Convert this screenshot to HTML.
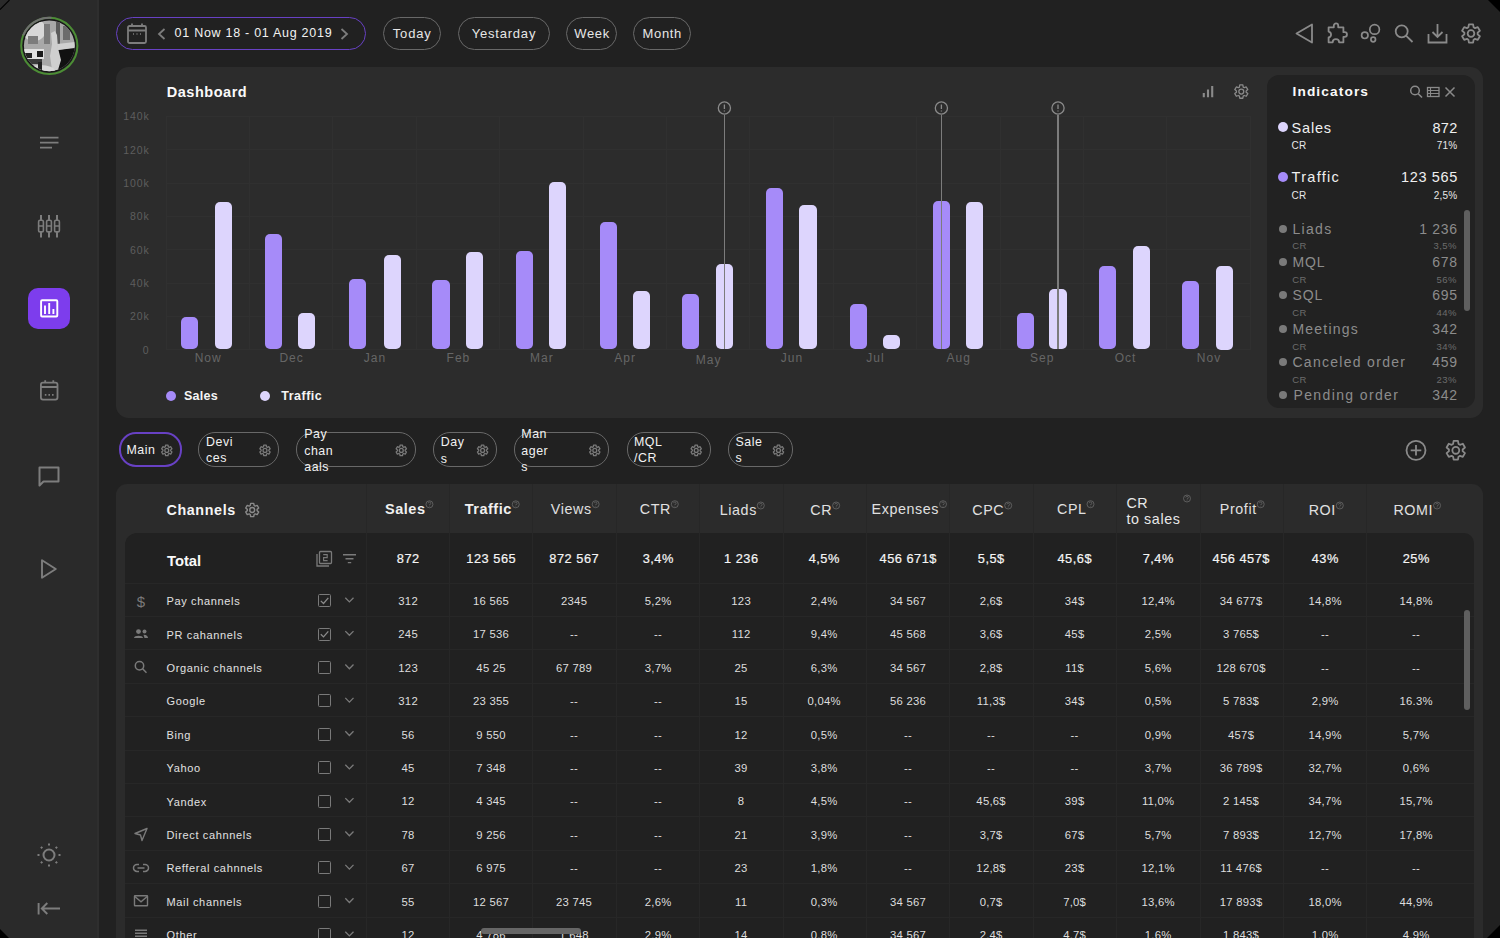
<!DOCTYPE html><html><head><meta charset="utf-8"><style>
*{box-sizing:border-box;margin:0;padding:0}
html,body{width:1500px;height:938px;overflow:hidden;background:#212121;font-family:"Liberation Sans", sans-serif;color:#fff}
.a{position:absolute}
.t{position:absolute;white-space:nowrap;line-height:1}
svg{position:absolute;overflow:visible}
</style></head><body><div class="a" style="left:0;top:0;width:99px;height:938px;background:#2a2a2a"></div>
<div class="a" style="left:96.8px;top:0;width:2.2px;height:938px;background:#2e2e2e"></div>
<svg style="left:0;top:0" width="1" height="1">
<defs><clipPath id="avc"><circle cx="49.3" cy="45.8" r="25.4"/></clipPath></defs>
<circle cx="49.3" cy="45.8" r="28.1" fill="none" stroke="#4c8d35" stroke-width="2"/>
<circle cx="49.3" cy="45.8" r="28.1" fill="none" stroke="#707070" stroke-width="2" stroke-dasharray="35.5 200" transform="rotate(202 49.3 45.8)"/>
<circle cx="49.3" cy="45.8" r="26.6" fill="#151515"/>
<g clip-path="url(#avc)">
<rect x="20" y="18" width="60" height="60" fill="#a8a8a8"/>
<ellipse cx="34" cy="30" rx="12" ry="11" fill="#d8d8d8"/>
<rect x="56" y="22" width="4" height="22" fill="#5a5a5a"/><rect x="63" y="26" width="7" height="14" fill="#6c6c6c"/>
<rect x="44" y="24" width="6" height="20" fill="#7a7a7a"/><rect x="28" y="36" width="10" height="8" fill="#7c7c7c"/>
<path d="M58 50L76 47V76H56Z" fill="#111"/>
<path d="M57 44L76 42V48L58 50Z" fill="#d0d0d0"/>
<rect x="22" y="49" width="22" height="10" fill="#e0e0e0"/>
<rect x="23" y="53" width="9" height="5" fill="#222"/><rect x="37" y="51" width="6" height="6" fill="#1a1a1a"/>
<rect x="22" y="59" width="20" height="5" fill="#3a3a3a"/>
<path d="M51 33L55 31L57 35L58 48L61 60L58 70L52 70L50 56L52 44Z" fill="#cfcfcf"/>
<ellipse cx="40" cy="71" rx="15" ry="6" fill="#d9d9d9"/>
<rect x="38" y="62" width="4" height="10" fill="#222"/>
</g></svg>
<svg style="left:0;top:0" width="1" height="1"><path d="M40 137.7H58.5M40 142.7H58.5M40 147.7H52" stroke="#7d7d7d" stroke-width="1.7" fill="none"/></svg>
<svg style="left:37px;top:214px" width="24" height="24" viewBox="0 0 24 24" fill="none" stroke="#7d7d7d" stroke-width="2">
<path d="M4 1V23.5M12 1V23.5M20 1V23.5"/>
<rect x="1.6" y="6.3" width="4.8" height="11.6" rx="1.5" fill="#2a2a2a" stroke-width="1.6"/><rect x="9.6" y="6.3" width="4.8" height="11.6" rx="1.5" fill="#2a2a2a" stroke-width="1.6"/><rect x="17.6" y="6.3" width="4.8" height="11.6" rx="1.5" fill="#2a2a2a" stroke-width="1.6"/>
<path d="M1.6 12H6.4M9.6 12H14.4M17.6 12H22.4" stroke-width="1.4"/>
</svg>
<div class="a" style="left:28px;top:287.5px;width:42px;height:41.7px;border-radius:10px;background:#7d3ded"></div>
<svg style="left:0;top:0" width="1" height="1" fill="none" stroke="#fff" stroke-width="1.9"><rect x="41.1" y="300.3" width="16.2" height="16.2" rx="1"/><path d="M45 305.6V314M49.2 302.9V314M53.4 309V314"/></svg>
<svg style="left:0;top:0" width="1" height="1" fill="none" stroke="#7d7d7d" stroke-width="1.8"><rect x="40.9" y="382.6" width="16.6" height="17" rx="2"/><path d="M40.9 387H57.5M45.2 380.3V383M53.3 380.3V383"/><path d="M44.8 394.8H46.4M48.4 394.8H50M52 394.8H53.6" stroke-width="1.7"/></svg>
<svg style="left:38px;top:465.7px" width="22" height="22" viewBox="0 0 22 22" fill="none" stroke="#7d7d7d" stroke-width="2"><path d="M1.5 1.5H20.5V15.5H5.5L1.5 19.5Z" stroke-linejoin="round"/></svg>
<svg style="left:0;top:0" width="1" height="1" fill="none" stroke="#7d7d7d" stroke-width="1.9"><path d="M42 560.3L55.8 569L42 577.7Z" stroke-linejoin="round"/></svg>
<svg style="left:36px;top:842px" width="26" height="26" viewBox="0 0 26 26" fill="none" stroke="#7d7d7d" stroke-width="2"><circle cx="13" cy="13" r="5.5"/>
<path d="M13 1.5V3.5M13 22.5V24.5M1.5 13H3.5M22.5 13H24.5M4.9 4.9L6.3 6.3M19.7 19.7L21.1 21.1M4.9 21.1L6.3 19.7M19.7 6.3L21.1 4.9"/></svg>
<svg style="left:0;top:0" width="1" height="1" fill="none" stroke="#7d7d7d" stroke-width="1.9"><path d="M38.6 903V914.5M60 908.5H42M47.3 903L41.8 908.5L47.3 914"/></svg>
<div class="a" style="left:116px;top:16.5px;width:250px;height:33.5px;border-radius:17px;border:1.8px solid #6841c4"></div>
<svg style="left:127px;top:23px" width="20" height="21" viewBox="0 0 20 21" fill="none" stroke="#7d7d7d" stroke-width="1.8"><rect x="1" y="3" width="18" height="17" rx="1.5"/><path d="M1 7.5H19M5 0.5V3.5M15 0.5V3.5"/><path d="M6 11H7M9.5 11H10.5M13 11H14" stroke-width="1.5"/></svg>
<svg style="left:157px;top:28px" width="9" height="12" viewBox="0 0 9 12" fill="none" stroke="#7d7d7d" stroke-width="1.8"><path d="M7.5 1L2 6L7.5 11"/></svg>
<div class="t" style="left:174.60px;top:27.12px;font-size:12.5px;color:#f2f2f2;letter-spacing:0.724px;">01 Now 18 - 01 Aug 2019</div>
<svg style="left:340px;top:28px" width="9" height="12" viewBox="0 0 9 12" fill="none" stroke="#7d7d7d" stroke-width="1.8"><path d="M1.5 1L7 6L1.5 11"/></svg>
<div class="a" style="left:382.5px;top:16.5px;width:58.5px;height:33.5px;border-radius:17px;border:1.7px solid #686868"></div>
<div class="t" style="left:392.80px;top:26.70px;font-size:13px;color:#e6e6e6;letter-spacing:0.827px;">Today</div>
<div class="a" style="left:457.5px;top:16.5px;width:92.2px;height:33.5px;border-radius:17px;border:1.7px solid #686868"></div>
<div class="t" style="left:471.70px;top:26.70px;font-size:13px;color:#e6e6e6;letter-spacing:0.795px;">Yestarday</div>
<div class="a" style="left:565.8px;top:16.5px;width:51.2px;height:33.5px;border-radius:17px;border:1.7px solid #686868"></div>
<div class="t" style="left:574.20px;top:26.70px;font-size:13px;color:#e6e6e6;letter-spacing:0.668px;">Week</div>
<div class="a" style="left:632.8px;top:16.5px;width:58.4px;height:33.5px;border-radius:17px;border:1.7px solid #686868"></div>
<div class="t" style="left:642.50px;top:26.70px;font-size:13px;color:#e6e6e6;letter-spacing:0.667px;">Month</div>
<svg style="left:1295px;top:23px" width="19" height="21" viewBox="0 0 19 21" fill="none" stroke="#8a8a8a" stroke-width="1.8" stroke-linejoin="round"><path d="M17 1.5V19.5L1.5 10.5Z"/></svg>
<svg style="left:0;top:0" width="1" height="1" fill="none" stroke="#8a8a8a" stroke-width="1.8" stroke-linejoin="round"><path d="M1328.6 27.3H1333.8V25.6A2.2 2.2 0 0 1 1338.2 25.6V27.3H1343.4V32.2H1344.6A2.35 2.35 0 0 1 1344.6 36.9H1343.4V42.3H1339.1A3.2 3.2 0 0 0 1332.7 42.3H1328.6V37.5A3 3 0 0 0 1328.6 31.6Z"/></svg>
<svg style="left:0;top:0" width="1" height="1" fill="none" stroke="#8a8a8a" stroke-width="1.7"><circle cx="1374.6" cy="29.4" r="4.8"/><circle cx="1364.8" cy="35.3" r="3.2"/><circle cx="1373.2" cy="39.5" r="2.3"/></svg>
<svg style="left:1394px;top:23px" width="20" height="20" viewBox="0 0 20 20" fill="none" stroke="#8a8a8a" stroke-width="1.8"><circle cx="7.7" cy="8.3" r="6"/><path d="M12 12.6L18.5 19"/></svg>
<svg style="left:1427px;top:23px" width="21" height="21" viewBox="0 0 21 21" fill="none" stroke="#8a8a8a" stroke-width="1.8"><path d="M1.5 11V19.5H19.5V11M10.5 1V14M5.5 9L10.5 14L15.5 9"/></svg>
<svg style="left:0;top:0" width="1" height="1"><path d="M1468.38 27.34L1468.91 24.44L1473.09 24.44L1473.62 27.34L1475.03 28.15L1477.80 27.16L1479.89 30.78L1477.65 32.68L1477.65 34.32L1479.89 36.22L1477.80 39.84L1475.03 38.85L1473.62 39.66L1473.09 42.56L1468.91 42.56L1468.38 39.66L1466.97 38.85L1464.20 39.84L1462.11 36.22L1464.35 34.32L1464.35 32.68L1462.11 30.78L1464.20 27.16L1466.97 28.15Z" fill="none" stroke="#8a8a8a" stroke-width="1.8" stroke-linejoin="round"/><circle cx="1471" cy="33.5" r="3.35" fill="none" stroke="#8a8a8a" stroke-width="1.8"/></svg>
<div class="a" style="left:116px;top:67px;width:1367px;height:350.5px;border-radius:12.5px;background:#2c2c2c"></div>
<div class="t" style="left:166.70px;top:84.83px;font-size:14.5px;color:#fafafa;font-weight:700;letter-spacing:0.533px;">Dashboard</div>
<div class="t" style="left:123.23px;top:111.41px;font-size:10.5px;color:#5e5e5e;letter-spacing:0.900px;">140k</div>
<div class="t" style="left:123.23px;top:144.74px;font-size:10.5px;color:#5e5e5e;letter-spacing:0.900px;">120k</div>
<div class="t" style="left:123.23px;top:178.07px;font-size:10.5px;color:#5e5e5e;letter-spacing:0.900px;">100k</div>
<div class="t" style="left:129.97px;top:211.40px;font-size:10.5px;color:#5e5e5e;letter-spacing:0.900px;">80k</div>
<div class="t" style="left:129.97px;top:244.73px;font-size:10.5px;color:#5e5e5e;letter-spacing:0.900px;">60k</div>
<div class="t" style="left:129.97px;top:278.06px;font-size:10.5px;color:#5e5e5e;letter-spacing:0.900px;">40k</div>
<div class="t" style="left:129.97px;top:311.39px;font-size:10.5px;color:#5e5e5e;letter-spacing:0.900px;">20k</div>
<div class="t" style="left:142.86px;top:344.72px;font-size:10.5px;color:#5e5e5e;letter-spacing:0.900px;">0</div>
<div class="a" style="left:166px;top:116.00px;width:1084px;height:1px;background:#303030"></div>
<div class="a" style="left:166px;top:149.33px;width:1084px;height:1px;background:#303030"></div>
<div class="a" style="left:166px;top:182.66px;width:1084px;height:1px;background:#303030"></div>
<div class="a" style="left:166px;top:215.99px;width:1084px;height:1px;background:#303030"></div>
<div class="a" style="left:166px;top:249.32px;width:1084px;height:1px;background:#303030"></div>
<div class="a" style="left:166px;top:282.65px;width:1084px;height:1px;background:#303030"></div>
<div class="a" style="left:166px;top:315.98px;width:1084px;height:1px;background:#303030"></div>
<div class="a" style="left:166px;top:349.31px;width:1084px;height:1px;background:#303030"></div>
<div class="a" style="left:165.50px;top:116px;width:1px;height:234px;background:#303030"></div>
<div class="a" style="left:248.90px;top:116px;width:1px;height:234px;background:#303030"></div>
<div class="a" style="left:332.30px;top:116px;width:1px;height:234px;background:#303030"></div>
<div class="a" style="left:415.70px;top:116px;width:1px;height:234px;background:#303030"></div>
<div class="a" style="left:499.10px;top:116px;width:1px;height:234px;background:#303030"></div>
<div class="a" style="left:582.50px;top:116px;width:1px;height:234px;background:#303030"></div>
<div class="a" style="left:665.90px;top:116px;width:1px;height:234px;background:#303030"></div>
<div class="a" style="left:749.30px;top:116px;width:1px;height:234px;background:#303030"></div>
<div class="a" style="left:832.70px;top:116px;width:1px;height:234px;background:#303030"></div>
<div class="a" style="left:916.10px;top:116px;width:1px;height:234px;background:#303030"></div>
<div class="a" style="left:999.50px;top:116px;width:1px;height:234px;background:#303030"></div>
<div class="a" style="left:1082.90px;top:116px;width:1px;height:234px;background:#303030"></div>
<div class="a" style="left:1166.30px;top:116px;width:1px;height:234px;background:#303030"></div>
<div class="a" style="left:1249.70px;top:116px;width:1px;height:234px;background:#303030"></div>
<div class="t" style="left:194.70px;top:352.34px;font-size:12px;color:#666666;letter-spacing:1.000px;">Now</div>
<div class="t" style="left:279.43px;top:352.34px;font-size:12px;color:#666666;letter-spacing:1.000px;">Dec</div>
<div class="t" style="left:363.83px;top:352.34px;font-size:12px;color:#666666;letter-spacing:1.000px;">Jan</div>
<div class="t" style="left:446.56px;top:352.34px;font-size:12px;color:#666666;letter-spacing:1.000px;">Feb</div>
<div class="t" style="left:529.97px;top:352.34px;font-size:12px;color:#666666;letter-spacing:1.000px;">Mar</div>
<div class="t" style="left:614.36px;top:352.34px;font-size:12px;color:#666666;letter-spacing:1.000px;">Apr</div>
<div class="t" style="left:695.76px;top:354.34px;font-size:12px;color:#666666;letter-spacing:1.000px;">May</div>
<div class="t" style="left:780.83px;top:352.34px;font-size:12px;color:#666666;letter-spacing:1.000px;">Jun</div>
<div class="t" style="left:866.23px;top:352.34px;font-size:12px;color:#666666;letter-spacing:1.000px;">Jul</div>
<div class="t" style="left:946.62px;top:352.34px;font-size:12px;color:#666666;letter-spacing:1.000px;">Aug</div>
<div class="t" style="left:1030.02px;top:352.34px;font-size:12px;color:#666666;letter-spacing:1.000px;">Sep</div>
<div class="t" style="left:1114.77px;top:352.34px;font-size:12px;color:#666666;letter-spacing:1.000px;">Oct</div>
<div class="t" style="left:1196.83px;top:352.34px;font-size:12px;color:#666666;letter-spacing:1.000px;">Nov</div>
<div class="a" style="left:181.30px;top:316.7px;width:17.2px;height:32.5px;border-radius:5px;background:#a68bf9"></div>
<div class="a" style="left:214.90px;top:202.0px;width:17.2px;height:147.2px;border-radius:5px;background:#ddd5fd"></div>
<div class="a" style="left:264.80px;top:234.4px;width:17.2px;height:114.8px;border-radius:5px;background:#a68bf9"></div>
<div class="a" style="left:298.00px;top:312.8px;width:17.2px;height:36.4px;border-radius:5px;background:#ddd5fd"></div>
<div class="a" style="left:349.20px;top:279.2px;width:17.2px;height:70.0px;border-radius:5px;background:#a68bf9"></div>
<div class="a" style="left:383.60px;top:255.2px;width:17.2px;height:94.0px;border-radius:5px;background:#ddd5fd"></div>
<div class="a" style="left:432.40px;top:280.4px;width:17.2px;height:68.8px;border-radius:5px;background:#a68bf9"></div>
<div class="a" style="left:466.00px;top:252.4px;width:17.2px;height:96.8px;border-radius:5px;background:#ddd5fd"></div>
<div class="a" style="left:516.00px;top:251.2px;width:17.2px;height:98.0px;border-radius:5px;background:#a68bf9"></div>
<div class="a" style="left:549.20px;top:182.4px;width:17.2px;height:166.8px;border-radius:5px;background:#ddd5fd"></div>
<div class="a" style="left:600.30px;top:222.0px;width:17.2px;height:127.2px;border-radius:5px;background:#a68bf9"></div>
<div class="a" style="left:632.70px;top:290.8px;width:17.2px;height:58.4px;border-radius:5px;background:#ddd5fd"></div>
<div class="a" style="left:681.70px;top:293.6px;width:17.2px;height:55.6px;border-radius:5px;background:#a68bf9"></div>
<div class="a" style="left:716.20px;top:263.8px;width:17.2px;height:85.4px;border-radius:5px;background:#ddd5fd"></div>
<div class="a" style="left:765.90px;top:187.5px;width:17.2px;height:161.7px;border-radius:5px;background:#a68bf9"></div>
<div class="a" style="left:799.40px;top:205.2px;width:17.2px;height:144.0px;border-radius:5px;background:#ddd5fd"></div>
<div class="a" style="left:849.50px;top:304.3px;width:17.2px;height:44.9px;border-radius:5px;background:#a68bf9"></div>
<div class="a" style="left:883.10px;top:335.2px;width:17.2px;height:14.0px;border-radius:5px;background:#ddd5fd"></div>
<div class="a" style="left:932.80px;top:200.8px;width:17.2px;height:148.4px;border-radius:5px;background:#a68bf9"></div>
<div class="a" style="left:966.20px;top:201.9px;width:17.2px;height:147.3px;border-radius:5px;background:#ddd5fd"></div>
<div class="a" style="left:1017.20px;top:312.6px;width:17.2px;height:36.6px;border-radius:5px;background:#a68bf9"></div>
<div class="a" style="left:1049.40px;top:288.8px;width:17.2px;height:60.4px;border-radius:5px;background:#ddd5fd"></div>
<div class="a" style="left:1099.30px;top:266.4px;width:17.2px;height:82.8px;border-radius:5px;background:#a68bf9"></div>
<div class="a" style="left:1133.00px;top:245.9px;width:17.2px;height:103.3px;border-radius:5px;background:#ddd5fd"></div>
<div class="a" style="left:1181.80px;top:281.1px;width:17.2px;height:68.1px;border-radius:5px;background:#a68bf9"></div>
<div class="a" style="left:1215.90px;top:266.4px;width:17.2px;height:83.8px;border-radius:5px;background:#ddd5fd"></div>
<div class="a" style="left:723.80px;top:115px;width:1.3px;height:234px;background:#7c7c7c"></div>
<svg style="left:0;top:0" width="1" height="1"><circle cx="724.4" cy="108" r="6.1" fill="#2c2c2c" stroke="#8a8a8a" stroke-width="1.3"/><path d="M724.4 104.5V109M724.4 110.6V111.6" stroke="#8a8a8a" stroke-width="1.3"/></svg>
<div class="a" style="left:940.80px;top:115px;width:1.3px;height:234px;background:#7c7c7c"></div>
<svg style="left:0;top:0" width="1" height="1"><circle cx="941.4" cy="108" r="6.1" fill="#2c2c2c" stroke="#8a8a8a" stroke-width="1.3"/><path d="M941.4 104.5V109M941.4 110.6V111.6" stroke="#8a8a8a" stroke-width="1.3"/></svg>
<div class="a" style="left:1057.40px;top:115px;width:1.3px;height:234px;background:#7c7c7c"></div>
<svg style="left:0;top:0" width="1" height="1"><circle cx="1058" cy="108" r="6.1" fill="#2c2c2c" stroke="#8a8a8a" stroke-width="1.3"/><path d="M1058 104.5V109M1058 110.6V111.6" stroke="#8a8a8a" stroke-width="1.3"/></svg>
<svg style="left:0;top:0" width="1" height="1"><path d="M1203.8 97.2V93M1208 97.2V89.5M1212.2 97.2V86" stroke="#8a8a8a" stroke-width="2.1"/></svg>
<svg style="left:0;top:0" width="1" height="1"><path d="M1239.39 87.09L1239.77 84.97L1242.83 84.97L1243.21 87.09L1244.25 87.69L1246.27 86.96L1247.80 89.61L1246.16 91.00L1246.16 92.20L1247.80 93.59L1246.27 96.24L1244.25 95.51L1243.21 96.11L1242.83 98.23L1239.77 98.23L1239.39 96.11L1238.35 95.51L1236.33 96.24L1234.80 93.59L1236.44 92.20L1236.44 91.00L1234.80 89.61L1236.33 86.96L1238.35 87.69Z" fill="none" stroke="#8a8a8a" stroke-width="1.3" stroke-linejoin="round"/><circle cx="1241.3" cy="91.6" r="2.45" fill="none" stroke="#8a8a8a" stroke-width="1.3"/></svg>
<div class="a" style="left:165.6px;top:390.6px;width:10.8px;height:10.8px;border-radius:50%;background:#a68bf9"></div>
<div class="t" style="left:184.00px;top:389.62px;font-size:12.5px;color:#f5f5f5;font-weight:700;letter-spacing:0.283px;">Sales</div>
<div class="a" style="left:259.6px;top:390.6px;width:10.8px;height:10.8px;border-radius:50%;background:#ddd5fd"></div>
<div class="t" style="left:281.30px;top:389.62px;font-size:12.5px;color:#f5f5f5;font-weight:700;letter-spacing:0.481px;">Traffic</div>
<div class="a" style="left:1267px;top:75px;width:208px;height:333px;border-radius:12px;background:#222222"></div>
<div class="t" style="left:1292.50px;top:85.10px;font-size:13.7px;color:#fafafa;font-weight:700;letter-spacing:1.114px;">Indicators</div>
<svg style="left:0;top:0" width="1" height="1"><circle cx="1415" cy="90.5" r="4.3" fill="none" stroke="#8a8a8a" stroke-width="1.5"/><path d="M1418.2 93.7L1422 97.5" stroke="#8a8a8a" stroke-width="1.6"/><rect x="1427.5" y="87.5" width="11.5" height="9" fill="none" stroke="#8a8a8a" stroke-width="1.3"/><path d="M1427.5 90.5H1439M1427.5 93.5H1439M1430.5 87.5V96.5" stroke="#8a8a8a" stroke-width="1.1"/><path d="M1445.5 87.5L1454.5 96.5M1454.5 87.5L1445.5 96.5" stroke="#8a8a8a" stroke-width="1.5"/></svg>
<div class="a" style="left:1277.8px;top:122px;width:10.4px;height:10.4px;border-radius:50%;background:#ddd5fd"></div>
<div class="t" style="left:1291.60px;top:120.53px;font-size:14.5px;color:#f0f0f0;letter-spacing:0.782px;">Sales</div>
<div class="t" style="left:1432.40px;top:120.53px;font-size:14.5px;color:#f0f0f0;letter-spacing:0.303px;">872</div>
<div class="t" style="left:1291.60px;top:140.84px;font-size:10px;color:#e8e8e8;letter-spacing:0.156px;">CR</div>
<div class="t" style="left:1436.79px;top:140.84px;font-size:10px;color:#e8e8e8;letter-spacing:0.200px;">71%</div>
<div class="a" style="left:1277.8px;top:172.1px;width:10.4px;height:10.4px;border-radius:50%;background:#a68bf9"></div>
<div class="t" style="left:1291.60px;top:169.53px;font-size:14.5px;color:#f0f0f0;letter-spacing:1.287px;">Traffic</div>
<div class="t" style="left:1401.00px;top:169.53px;font-size:14.5px;color:#f0f0f0;letter-spacing:0.631px;">123 565</div>
<div class="t" style="left:1291.60px;top:191.03px;font-size:10px;color:#e8e8e8;letter-spacing:0.156px;">CR</div>
<div class="t" style="left:1433.81px;top:191.03px;font-size:10px;color:#e8e8e8;letter-spacing:0.200px;">2,5%</div>
<div class="a" style="left:1278.6px;top:224.6px;width:8.4px;height:8.4px;border-radius:50%;background:#7a7a7a"></div>
<div class="t" style="left:1292.40px;top:222.05px;font-size:14px;color:#8c8c8c;letter-spacing:1.333px;">Liads</div>
<div class="t" style="left:1419.16px;top:222.05px;font-size:14px;color:#8c8c8c;letter-spacing:0.700px;">1 236</div>
<div class="t" style="left:1292.20px;top:241.36px;font-size:9.5px;color:#6c6c6c;letter-spacing:0.500px;">CR</div>
<div class="t" style="left:1433.50px;top:241.36px;font-size:9.5px;color:#6c6c6c;letter-spacing:0.450px;">3,5%</div>
<div class="a" style="left:1278.6px;top:257.7px;width:8.4px;height:8.4px;border-radius:50%;background:#7a7a7a"></div>
<div class="t" style="left:1292.40px;top:255.15px;font-size:14px;color:#8c8c8c;letter-spacing:0.900px;">MQL</div>
<div class="t" style="left:1432.24px;top:255.15px;font-size:14px;color:#8c8c8c;letter-spacing:0.700px;">678</div>
<div class="t" style="left:1292.20px;top:274.76px;font-size:9.5px;color:#6c6c6c;letter-spacing:0.500px;">CR</div>
<div class="t" style="left:1436.59px;top:274.76px;font-size:9.5px;color:#6c6c6c;letter-spacing:0.450px;">56%</div>
<div class="a" style="left:1278.6px;top:291.0px;width:8.4px;height:8.4px;border-radius:50%;background:#7a7a7a"></div>
<div class="t" style="left:1292.40px;top:288.45px;font-size:14px;color:#8c8c8c;letter-spacing:0.900px;">SQL</div>
<div class="t" style="left:1432.24px;top:288.45px;font-size:14px;color:#8c8c8c;letter-spacing:0.700px;">695</div>
<div class="t" style="left:1292.20px;top:308.06px;font-size:9.5px;color:#6c6c6c;letter-spacing:0.500px;">CR</div>
<div class="t" style="left:1436.59px;top:308.06px;font-size:9.5px;color:#6c6c6c;letter-spacing:0.450px;">44%</div>
<div class="a" style="left:1278.6px;top:324.6px;width:8.4px;height:8.4px;border-radius:50%;background:#7a7a7a"></div>
<div class="t" style="left:1292.40px;top:322.05px;font-size:14px;color:#8c8c8c;letter-spacing:1.227px;">Meetings</div>
<div class="t" style="left:1432.24px;top:322.05px;font-size:14px;color:#8c8c8c;letter-spacing:0.700px;">342</div>
<div class="t" style="left:1292.20px;top:341.66px;font-size:9.5px;color:#6c6c6c;letter-spacing:0.500px;">CR</div>
<div class="t" style="left:1436.59px;top:341.66px;font-size:9.5px;color:#6c6c6c;letter-spacing:0.450px;">34%</div>
<div class="a" style="left:1278.6px;top:357.7px;width:8.4px;height:8.4px;border-radius:50%;background:#7a7a7a"></div>
<div class="t" style="left:1292.40px;top:355.15px;font-size:14px;color:#8c8c8c;letter-spacing:1.298px;">Canceled order</div>
<div class="t" style="left:1432.24px;top:355.15px;font-size:14px;color:#8c8c8c;letter-spacing:0.700px;">459</div>
<div class="t" style="left:1292.20px;top:375.26px;font-size:9.5px;color:#6c6c6c;letter-spacing:0.500px;">CR</div>
<div class="t" style="left:1436.59px;top:375.26px;font-size:9.5px;color:#6c6c6c;letter-spacing:0.450px;">23%</div>
<div class="a" style="left:1278.6px;top:390.5px;width:8.4px;height:8.4px;border-radius:50%;background:#7a7a7a"></div>
<div class="t" style="left:1293.50px;top:387.95px;font-size:14px;color:#8c8c8c;letter-spacing:1.370px;">Pending order</div>
<div class="t" style="left:1432.24px;top:387.95px;font-size:14px;color:#8c8c8c;letter-spacing:0.700px;">342</div>
<div class="a" style="left:1463.8px;top:210px;width:6px;height:101px;border-radius:3px;background:#5f5f5f"></div>
<div class="a" style="left:118.7px;top:432.3px;width:63.0px;height:34.8px;border-radius:17px;border:2px solid #6841c4"></div>
<div class="t" style="left:126.50px;top:444.30px;font-size:12.4px;color:#f2f2f2;letter-spacing:0.550px;">Main</div>
<svg style="left:0;top:0" width="1" height="1"><path d="M165.28 446.82L165.59 445.14L168.01 445.14L168.32 446.82L169.14 447.29L170.75 446.72L171.96 448.82L170.66 449.93L170.66 450.87L171.96 451.98L170.75 454.08L169.14 453.51L168.32 453.98L168.01 455.66L165.59 455.66L165.28 453.98L164.46 453.51L162.85 454.08L161.64 451.98L162.94 450.87L162.94 449.93L161.64 448.82L162.85 446.72L164.46 447.29Z" fill="none" stroke="#7a7a7a" stroke-width="1.3" stroke-linejoin="round"/><circle cx="166.8" cy="450.4" r="1.94" fill="none" stroke="#7a7a7a" stroke-width="1.3"/></svg>
<div class="a" style="left:198.4px;top:432.3px;width:81.0px;height:34.8px;border-radius:17px;border:1.8px solid #686868"></div>
<div class="t" style="left:206.00px;top:435.60px;font-size:12.4px;color:#f2f2f2;letter-spacing:0.550px;">Devi</div>
<div class="t" style="left:206.00px;top:452.10px;font-size:12.4px;color:#f2f2f2;letter-spacing:0.550px;">ces</div>
<svg style="left:0;top:0" width="1" height="1"><path d="M263.48 446.82L263.79 445.14L266.21 445.14L266.52 446.82L267.34 447.29L268.95 446.72L270.16 448.82L268.86 449.93L268.86 450.87L270.16 451.98L268.95 454.08L267.34 453.51L266.52 453.98L266.21 455.66L263.79 455.66L263.48 453.98L262.66 453.51L261.05 454.08L259.84 451.98L261.14 450.87L261.14 449.93L259.84 448.82L261.05 446.72L262.66 447.29Z" fill="none" stroke="#7a7a7a" stroke-width="1.3" stroke-linejoin="round"/><circle cx="265" cy="450.4" r="1.94" fill="none" stroke="#7a7a7a" stroke-width="1.3"/></svg>
<div class="a" style="left:296px;top:432.3px;width:119.8px;height:34.8px;border-radius:17px;border:1.8px solid #686868"></div>
<div class="t" style="left:304.20px;top:427.90px;font-size:12.4px;color:#f2f2f2;letter-spacing:0.550px;">Pay</div>
<div class="t" style="left:304.20px;top:444.50px;font-size:12.4px;color:#f2f2f2;letter-spacing:0.550px;">chan</div>
<div class="t" style="left:304.20px;top:461.00px;font-size:12.4px;color:#f2f2f2;letter-spacing:0.550px;">aals</div>
<svg style="left:0;top:0" width="1" height="1"><path d="M399.78 446.82L400.09 445.14L402.51 445.14L402.82 446.82L403.64 447.29L405.25 446.72L406.46 448.82L405.16 449.93L405.16 450.87L406.46 451.98L405.25 454.08L403.64 453.51L402.82 453.98L402.51 455.66L400.09 455.66L399.78 453.98L398.96 453.51L397.35 454.08L396.14 451.98L397.44 450.87L397.44 449.93L396.14 448.82L397.35 446.72L398.96 447.29Z" fill="none" stroke="#7a7a7a" stroke-width="1.3" stroke-linejoin="round"/><circle cx="401.3" cy="450.4" r="1.94" fill="none" stroke="#7a7a7a" stroke-width="1.3"/></svg>
<div class="a" style="left:432.7px;top:432.3px;width:64.6px;height:34.8px;border-radius:17px;border:1.8px solid #686868"></div>
<div class="t" style="left:440.80px;top:436.20px;font-size:12.4px;color:#f2f2f2;letter-spacing:0.550px;">Day</div>
<div class="t" style="left:440.80px;top:452.70px;font-size:12.4px;color:#f2f2f2;letter-spacing:0.550px;">s</div>
<svg style="left:0;top:0" width="1" height="1"><path d="M481.08 446.82L481.39 445.14L483.81 445.14L484.12 446.82L484.94 447.29L486.55 446.72L487.76 448.82L486.46 449.93L486.46 450.87L487.76 451.98L486.55 454.08L484.94 453.51L484.12 453.98L483.81 455.66L481.39 455.66L481.08 453.98L480.26 453.51L478.65 454.08L477.44 451.98L478.74 450.87L478.74 449.93L477.44 448.82L478.65 446.72L480.26 447.29Z" fill="none" stroke="#7a7a7a" stroke-width="1.3" stroke-linejoin="round"/><circle cx="482.6" cy="450.4" r="1.94" fill="none" stroke="#7a7a7a" stroke-width="1.3"/></svg>
<div class="a" style="left:514.2px;top:432.3px;width:95.3px;height:34.8px;border-radius:17px;border:1.8px solid #686868"></div>
<div class="t" style="left:521.30px;top:427.90px;font-size:12.4px;color:#f2f2f2;letter-spacing:0.550px;">Man</div>
<div class="t" style="left:521.30px;top:444.90px;font-size:12.4px;color:#f2f2f2;letter-spacing:0.550px;">ager</div>
<div class="t" style="left:521.30px;top:460.80px;font-size:12.4px;color:#f2f2f2;letter-spacing:0.550px;">s</div>
<svg style="left:0;top:0" width="1" height="1"><path d="M593.28 446.82L593.59 445.14L596.01 445.14L596.32 446.82L597.14 447.29L598.75 446.72L599.96 448.82L598.66 449.93L598.66 450.87L599.96 451.98L598.75 454.08L597.14 453.51L596.32 453.98L596.01 455.66L593.59 455.66L593.28 453.98L592.46 453.51L590.85 454.08L589.64 451.98L590.94 450.87L590.94 449.93L589.64 448.82L590.85 446.72L592.46 447.29Z" fill="none" stroke="#7a7a7a" stroke-width="1.3" stroke-linejoin="round"/><circle cx="594.8" cy="450.4" r="1.94" fill="none" stroke="#7a7a7a" stroke-width="1.3"/></svg>
<div class="a" style="left:626.5px;top:432.3px;width:84.4px;height:34.8px;border-radius:17px;border:1.8px solid #686868"></div>
<div class="t" style="left:634.00px;top:436.20px;font-size:12.4px;color:#f2f2f2;letter-spacing:0.550px;">MQL</div>
<div class="t" style="left:634.00px;top:452.40px;font-size:12.4px;color:#f2f2f2;letter-spacing:0.550px;">/CR</div>
<svg style="left:0;top:0" width="1" height="1"><path d="M694.68 446.82L694.99 445.14L697.41 445.14L697.72 446.82L698.54 447.29L700.15 446.72L701.36 448.82L700.06 449.93L700.06 450.87L701.36 451.98L700.15 454.08L698.54 453.51L697.72 453.98L697.41 455.66L694.99 455.66L694.68 453.98L693.86 453.51L692.25 454.08L691.04 451.98L692.34 450.87L692.34 449.93L691.04 448.82L692.25 446.72L693.86 447.29Z" fill="none" stroke="#7a7a7a" stroke-width="1.3" stroke-linejoin="round"/><circle cx="696.2" cy="450.4" r="1.94" fill="none" stroke="#7a7a7a" stroke-width="1.3"/></svg>
<div class="a" style="left:727.8px;top:432.3px;width:65.1px;height:34.8px;border-radius:17px;border:1.8px solid #686868"></div>
<div class="t" style="left:735.40px;top:436.20px;font-size:12.4px;color:#f2f2f2;letter-spacing:0.550px;">Sale</div>
<div class="t" style="left:735.40px;top:452.40px;font-size:12.4px;color:#f2f2f2;letter-spacing:0.550px;">s</div>
<svg style="left:0;top:0" width="1" height="1"><path d="M776.98 446.82L777.29 445.14L779.71 445.14L780.02 446.82L780.84 447.29L782.45 446.72L783.66 448.82L782.36 449.93L782.36 450.87L783.66 451.98L782.45 454.08L780.84 453.51L780.02 453.98L779.71 455.66L777.29 455.66L776.98 453.98L776.16 453.51L774.55 454.08L773.34 451.98L774.64 450.87L774.64 449.93L773.34 448.82L774.55 446.72L776.16 447.29Z" fill="none" stroke="#7a7a7a" stroke-width="1.3" stroke-linejoin="round"/><circle cx="778.5" cy="450.4" r="1.94" fill="none" stroke="#7a7a7a" stroke-width="1.3"/></svg>
<svg style="left:0;top:0" width="1" height="1"><circle cx="1416" cy="450.3" r="9.5" fill="none" stroke="#8a8a8a" stroke-width="1.8"/><path d="M1416 445V455.6M1410.7 450.3H1421.3" stroke="#8a8a8a" stroke-width="1.8"/></svg>
<svg style="left:0;top:0" width="1" height="1"><path d="M1453.10 443.94L1453.64 440.95L1457.96 440.95L1458.50 443.94L1459.96 444.78L1462.82 443.75L1464.98 447.49L1462.66 449.46L1462.66 451.14L1464.98 453.11L1462.82 456.85L1459.96 455.82L1458.50 456.66L1457.96 459.65L1453.64 459.65L1453.10 456.66L1451.64 455.82L1448.78 456.85L1446.62 453.11L1448.94 451.14L1448.94 449.46L1446.62 447.49L1448.78 443.75L1451.64 444.78Z" fill="none" stroke="#8a8a8a" stroke-width="1.8" stroke-linejoin="round"/><circle cx="1455.8" cy="450.3" r="3.46" fill="none" stroke="#8a8a8a" stroke-width="1.8"/></svg>
<div class="a" style="left:116px;top:484px;width:1367px;height:470px;border-radius:11px;background:#2b2b2b"></div>
<div class="a" style="left:124.5px;top:533px;width:1349.5px;height:420px;border-radius:12px 10px 0 0;background:#212121"></div>
<div class="a" style="left:365.5px;top:484px;width:1px;height:454px;background:#272727"></div>
<div class="a" style="left:448.9px;top:484px;width:1px;height:454px;background:#272727"></div>
<div class="a" style="left:532.3px;top:484px;width:1px;height:454px;background:#272727"></div>
<div class="a" style="left:615.7px;top:484px;width:1px;height:454px;background:#272727"></div>
<div class="a" style="left:699.1px;top:484px;width:1px;height:454px;background:#272727"></div>
<div class="a" style="left:782.5px;top:484px;width:1px;height:454px;background:#272727"></div>
<div class="a" style="left:865.9px;top:484px;width:1px;height:454px;background:#272727"></div>
<div class="a" style="left:949.3px;top:484px;width:1px;height:454px;background:#272727"></div>
<div class="a" style="left:1032.7px;top:484px;width:1px;height:454px;background:#272727"></div>
<div class="a" style="left:1116.1px;top:484px;width:1px;height:454px;background:#272727"></div>
<div class="a" style="left:1199.5px;top:484px;width:1px;height:454px;background:#272727"></div>
<div class="a" style="left:1282.9px;top:484px;width:1px;height:454px;background:#272727"></div>
<div class="a" style="left:1366.3px;top:484px;width:1px;height:454px;background:#272727"></div>
<div class="a" style="left:124.5px;top:582.5px;width:1349.5px;height:1px;background:#272727"></div>
<div class="a" style="left:124.5px;top:615.9px;width:1349.5px;height:1px;background:#272727"></div>
<div class="a" style="left:124.5px;top:649.3px;width:1349.5px;height:1px;background:#272727"></div>
<div class="a" style="left:124.5px;top:682.7px;width:1349.5px;height:1px;background:#272727"></div>
<div class="a" style="left:124.5px;top:716.1px;width:1349.5px;height:1px;background:#272727"></div>
<div class="a" style="left:124.5px;top:749.5px;width:1349.5px;height:1px;background:#272727"></div>
<div class="a" style="left:124.5px;top:782.9px;width:1349.5px;height:1px;background:#272727"></div>
<div class="a" style="left:124.5px;top:816.3px;width:1349.5px;height:1px;background:#272727"></div>
<div class="a" style="left:124.5px;top:849.7px;width:1349.5px;height:1px;background:#272727"></div>
<div class="a" style="left:124.5px;top:883.1px;width:1349.5px;height:1px;background:#272727"></div>
<div class="a" style="left:124.5px;top:916.5px;width:1349.5px;height:1px;background:#272727"></div>
<div class="t" style="left:166.50px;top:502.90px;font-size:14.3px;color:#f5f5f5;font-weight:700;letter-spacing:0.619px;">Channels</div>
<svg style="left:0;top:0" width="1" height="1"><path d="M250.29 505.49L250.67 503.37L253.73 503.37L254.11 505.49L255.15 506.09L257.17 505.36L258.70 508.01L257.06 509.40L257.06 510.60L258.70 511.99L257.17 514.64L255.15 513.91L254.11 514.51L253.73 516.63L250.67 516.63L250.29 514.51L249.25 513.91L247.23 514.64L245.70 511.99L247.34 510.60L247.34 509.40L245.70 508.01L247.23 505.36L249.25 506.09Z" fill="none" stroke="#8a8a8a" stroke-width="1.4" stroke-linejoin="round"/><circle cx="252.2" cy="510" r="2.45" fill="none" stroke="#8a8a8a" stroke-width="1.4"/></svg>
<div class="t" style="left:385.05px;top:502.03px;font-size:14.5px;color:#f0f0f0;font-weight:700;letter-spacing:0.500px;">Sales</div>
<svg style="left:0;top:0" width="1" height="1"><circle cx="429.44685546875" cy="504.29999999999995" r="3.5" fill="none" stroke="#6a6a6a" stroke-width="0.8"/><path d="M428.15 503.30A1.3 1.3 0 1 1 429.45 504.70V505.30M429.45 506.10V506.60" fill="none" stroke="#6a6a6a" stroke-width="0.7"/></svg>
<div class="t" style="left:464.74px;top:502.03px;font-size:14.5px;color:#f0f0f0;font-weight:700;letter-spacing:0.500px;">Traffic</div>
<svg style="left:0;top:0" width="1" height="1"><circle cx="515.7579296875" cy="504.29999999999995" r="3.5" fill="none" stroke="#6a6a6a" stroke-width="0.8"/><path d="M514.46 503.30A1.3 1.3 0 1 1 515.76 504.70V505.30M515.76 506.10V506.60" fill="none" stroke="#6a6a6a" stroke-width="0.7"/></svg>
<div class="t" style="left:550.86px;top:502.10px;font-size:14.3px;color:#e0e0e0;letter-spacing:0.600px;">Views</div>
<svg style="left:0;top:0" width="1" height="1"><circle cx="595.6441484375" cy="504.20000000000005" r="3.5" fill="none" stroke="#6a6a6a" stroke-width="0.8"/><path d="M594.34 503.20A1.3 1.3 0 1 1 595.64 504.60V505.20M595.64 506.00V506.50" fill="none" stroke="#6a6a6a" stroke-width="0.7"/></svg>
<div class="t" style="left:639.71px;top:502.10px;font-size:14.3px;color:#e0e0e0;letter-spacing:0.600px;">CTR</div>
<svg style="left:0;top:0" width="1" height="1"><circle cx="674.79492578125" cy="504.20000000000005" r="3.5" fill="none" stroke="#6a6a6a" stroke-width="0.8"/><path d="M673.49 503.20A1.3 1.3 0 1 1 674.79 504.60V505.20M674.79 506.00V506.50" fill="none" stroke="#6a6a6a" stroke-width="0.7"/></svg>
<div class="t" style="left:719.71px;top:503.40px;font-size:14.3px;color:#e0e0e0;letter-spacing:0.600px;">Liads</div>
<svg style="left:0;top:0" width="1" height="1"><circle cx="760.79352734375" cy="505.5" r="3.5" fill="none" stroke="#6a6a6a" stroke-width="0.8"/><path d="M759.49 504.50A1.3 1.3 0 1 1 760.79 505.90V506.50M760.79 507.30V507.80" fill="none" stroke="#6a6a6a" stroke-width="0.7"/></svg>
<div class="t" style="left:810.37px;top:503.40px;font-size:14.3px;color:#e0e0e0;letter-spacing:0.600px;">CR</div>
<svg style="left:0;top:0" width="1" height="1"><circle cx="836.12728125" cy="505.5" r="3.5" fill="none" stroke="#6a6a6a" stroke-width="0.8"/><path d="M834.83 504.50A1.3 1.3 0 1 1 836.13 505.90V506.50M836.13 507.30V507.80" fill="none" stroke="#6a6a6a" stroke-width="0.7"/></svg>
<div class="t" style="left:871.50px;top:502.10px;font-size:14.3px;color:#e0e0e0;letter-spacing:0.600px;">Expenses</div>
<svg style="left:0;top:0" width="1" height="1"><circle cx="943.0007890625" cy="504.20000000000005" r="3.5" fill="none" stroke="#6a6a6a" stroke-width="0.8"/><path d="M941.70 503.20A1.3 1.3 0 1 1 943.00 504.60V505.20M943.00 506.00V506.50" fill="none" stroke="#6a6a6a" stroke-width="0.7"/></svg>
<div class="t" style="left:972.30px;top:503.40px;font-size:14.3px;color:#e0e0e0;letter-spacing:0.600px;">CPC</div>
<svg style="left:0;top:0" width="1" height="1"><circle cx="1008.1965546875" cy="505.5" r="3.5" fill="none" stroke="#6a6a6a" stroke-width="0.8"/><path d="M1006.90 504.50A1.3 1.3 0 1 1 1008.20 505.90V506.50M1008.20 507.30V507.80" fill="none" stroke="#6a6a6a" stroke-width="0.7"/></svg>
<div class="t" style="left:1056.99px;top:502.10px;font-size:14.3px;color:#e0e0e0;letter-spacing:0.600px;">CPL</div>
<svg style="left:0;top:0" width="1" height="1"><circle cx="1090.50954296875" cy="504.20000000000005" r="3.5" fill="none" stroke="#6a6a6a" stroke-width="0.8"/><path d="M1089.21 503.20A1.3 1.3 0 1 1 1090.51 504.60V505.20M1090.51 506.00V506.50" fill="none" stroke="#6a6a6a" stroke-width="0.7"/></svg>
<div class="t" style="left:1126.40px;top:495.60px;font-size:14.3px;color:#e8e8e8;letter-spacing:0.600px;">CR</div>
<div class="t" style="left:1126.40px;top:511.70px;font-size:14.3px;color:#e8e8e8;letter-spacing:0.600px;">to sales</div>
<svg style="left:0;top:0" width="1" height="1"><circle cx="1187" cy="498.5" r="3.5" fill="none" stroke="#6a6a6a" stroke-width="0.8"/><path d="M1185.70 497.50A1.3 1.3 0 1 1 1187.00 498.90V499.50M1187.00 500.30V500.80" fill="none" stroke="#6a6a6a" stroke-width="0.7"/></svg>
<div class="t" style="left:1219.81px;top:502.10px;font-size:14.3px;color:#e0e0e0;letter-spacing:0.600px;">Profit</div>
<svg style="left:0;top:0" width="1" height="1"><circle cx="1260.688546875" cy="504.20000000000005" r="3.5" fill="none" stroke="#6a6a6a" stroke-width="0.8"/><path d="M1259.39 503.20A1.3 1.3 0 1 1 1260.69 504.60V505.20M1260.69 506.00V506.50" fill="none" stroke="#6a6a6a" stroke-width="0.7"/></svg>
<div class="t" style="left:1308.69px;top:503.40px;font-size:14.3px;color:#e0e0e0;letter-spacing:0.600px;">ROI</div>
<svg style="left:0;top:0" width="1" height="1"><circle cx="1339.811359375" cy="505.5" r="3.5" fill="none" stroke="#6a6a6a" stroke-width="0.8"/><path d="M1338.51 504.50A1.3 1.3 0 1 1 1339.81 505.90V506.50M1339.81 507.30V507.80" fill="none" stroke="#6a6a6a" stroke-width="0.7"/></svg>
<div class="t" style="left:1393.43px;top:503.40px;font-size:14.3px;color:#e0e0e0;letter-spacing:0.600px;">ROMI</div>
<svg style="left:0;top:0" width="1" height="1"><circle cx="1437.06764453125" cy="505.5" r="3.5" fill="none" stroke="#6a6a6a" stroke-width="0.8"/><path d="M1435.77 504.50A1.3 1.3 0 1 1 1437.07 505.90V506.50M1437.07 507.30V507.80" fill="none" stroke="#6a6a6a" stroke-width="0.7"/></svg>
<div class="t" style="left:167.00px;top:553.87px;font-size:14.8px;color:#fafafa;font-weight:700;letter-spacing:-0.014px;">Total</div>
<svg style="left:0;top:0" width="1" height="1" fill="none" stroke="#7a7a7a" stroke-width="1.3"><rect x="319.5" y="551.5" width="12" height="12" rx="1"/><path d="M317 554V566H329"/><path d="M323.2 554.6H327.2V557.6H323.6V560.6H327.6" stroke-width="1.1"/></svg>
<svg style="left:0;top:0" width="1" height="1" fill="none" stroke="#7a7a7a" stroke-width="1.4"><path d="M343 554.8H356M345.5 558.8H353.5M347.8 562.6H351.2"/></svg>
<div class="t" style="left:396.82px;top:552.56px;font-size:12.8px;color:#f5f5f5;letter-spacing:0.500px;-webkit-text-stroke:0.2px #f5f5f5;">872</div>
<div class="t" style="left:466.37px;top:552.56px;font-size:12.8px;color:#f5f5f5;letter-spacing:0.500px;-webkit-text-stroke:0.2px #f5f5f5;">123 565</div>
<div class="t" style="left:549.37px;top:552.56px;font-size:12.8px;color:#f5f5f5;letter-spacing:0.500px;-webkit-text-stroke:0.2px #f5f5f5;">872 567</div>
<div class="t" style="left:642.66px;top:552.56px;font-size:12.8px;color:#f5f5f5;letter-spacing:0.500px;-webkit-text-stroke:0.2px #f5f5f5;">3,4%</div>
<div class="t" style="left:723.98px;top:552.56px;font-size:12.8px;color:#f5f5f5;letter-spacing:0.500px;-webkit-text-stroke:0.2px #f5f5f5;">1 236</div>
<div class="t" style="left:808.66px;top:552.56px;font-size:12.8px;color:#f5f5f5;letter-spacing:0.500px;-webkit-text-stroke:0.2px #f5f5f5;">4,5%</div>
<div class="t" style="left:879.56px;top:552.56px;font-size:12.8px;color:#f5f5f5;letter-spacing:0.500px;-webkit-text-stroke:0.2px #f5f5f5;">456 671$</div>
<div class="t" style="left:977.79px;top:552.56px;font-size:12.8px;color:#f5f5f5;letter-spacing:0.500px;-webkit-text-stroke:0.2px #f5f5f5;">5,5$</div>
<div class="t" style="left:1057.48px;top:552.56px;font-size:12.8px;color:#f5f5f5;letter-spacing:0.500px;-webkit-text-stroke:0.2px #f5f5f5;">45,6$</div>
<div class="t" style="left:1142.66px;top:552.56px;font-size:12.8px;color:#f5f5f5;letter-spacing:0.500px;-webkit-text-stroke:0.2px #f5f5f5;">7,4%</div>
<div class="t" style="left:1212.56px;top:552.56px;font-size:12.8px;color:#f5f5f5;letter-spacing:0.500px;-webkit-text-stroke:0.2px #f5f5f5;">456 457$</div>
<div class="t" style="left:1311.69px;top:552.56px;font-size:12.8px;color:#f5f5f5;letter-spacing:0.500px;-webkit-text-stroke:0.2px #f5f5f5;">43%</div>
<div class="t" style="left:1402.69px;top:552.56px;font-size:12.8px;color:#f5f5f5;letter-spacing:0.500px;-webkit-text-stroke:0.2px #f5f5f5;">25%</div>
<div class="t" style="left:166.50px;top:596.19px;font-size:11px;color:#e2e2e2;letter-spacing:0.650px;">Pay channels</div>
<div class="a" style="left:318px;top:594.2px;width:13px;height:13px;border:1.3px solid #7a7a7a;border-radius:1.5px"></div>
<svg style="left:0;top:0" width="1" height="1"><path d="M320.8 600.9L323.5 603.5L328.3 597.9" fill="none" stroke="#8a8a8a" stroke-width="1.3"/></svg>
<svg style="left:0;top:0" width="1" height="1"><path d="M345.3 597.7L349.4 601.9L353.5 597.7" fill="none" stroke="#7a7a7a" stroke-width="1.3"/></svg>
<div class="t" style="left:136.83px;top:593.50px;font-size:15px;color:#7a7a7a;letter-spacing:0.000px;">$</div>
<div class="t" style="left:398.32px;top:595.93px;font-size:11.3px;color:#dedede;letter-spacing:0.250px;">312</div>
<div class="t" style="left:473.09px;top:595.93px;font-size:11.3px;color:#dedede;letter-spacing:0.250px;">16 565</div>
<div class="t" style="left:561.06px;top:595.93px;font-size:11.3px;color:#dedede;letter-spacing:0.250px;">2345</div>
<div class="t" style="left:644.75px;top:595.93px;font-size:11.3px;color:#dedede;letter-spacing:0.250px;">5,2%</div>
<div class="t" style="left:731.32px;top:595.93px;font-size:11.3px;color:#dedede;letter-spacing:0.250px;">123</div>
<div class="t" style="left:810.75px;top:595.93px;font-size:11.3px;color:#dedede;letter-spacing:0.250px;">2,4%</div>
<div class="t" style="left:890.09px;top:595.93px;font-size:11.3px;color:#dedede;letter-spacing:0.250px;">34 567</div>
<div class="t" style="left:979.63px;top:595.93px;font-size:11.3px;color:#dedede;letter-spacing:0.250px;">2,6$</div>
<div class="t" style="left:1064.82px;top:595.93px;font-size:11.3px;color:#dedede;letter-spacing:0.250px;">34$</div>
<div class="t" style="left:1141.48px;top:595.93px;font-size:11.3px;color:#dedede;letter-spacing:0.250px;">12,4%</div>
<div class="t" style="left:1219.83px;top:595.93px;font-size:11.3px;color:#dedede;letter-spacing:0.250px;">34 677$</div>
<div class="t" style="left:1308.48px;top:595.93px;font-size:11.3px;color:#dedede;letter-spacing:0.250px;">14,8%</div>
<div class="t" style="left:1399.48px;top:595.93px;font-size:11.3px;color:#dedede;letter-spacing:0.250px;">14,8%</div>
<div class="t" style="left:166.50px;top:629.59px;font-size:11px;color:#e2e2e2;letter-spacing:0.650px;">PR cahannels</div>
<div class="a" style="left:318px;top:627.6px;width:13px;height:13px;border:1.3px solid #7a7a7a;border-radius:1.5px"></div>
<svg style="left:0;top:0" width="1" height="1"><path d="M320.8 634.3L323.5 636.9L328.3 631.3" fill="none" stroke="#8a8a8a" stroke-width="1.3"/></svg>
<svg style="left:0;top:0" width="1" height="1"><path d="M345.3 631.1L349.4 635.3L353.5 631.1" fill="none" stroke="#7a7a7a" stroke-width="1.3"/></svg>
<svg style="left:0;top:0" width="1" height="1" fill="#7a7a7a"><circle cx="138.5" cy="631.6" r="2.4"/><path d="M134 638.1C134 634.9 143 634.9 143 638.1Z"/><circle cx="144.5" cy="631.6" r="2"/><path d="M143.5 634.7C146 634.4 148 635.9 148 638.1H144.5Z"/></svg>
<div class="t" style="left:398.32px;top:629.33px;font-size:11.3px;color:#dedede;letter-spacing:0.250px;">245</div>
<div class="t" style="left:473.09px;top:629.33px;font-size:11.3px;color:#dedede;letter-spacing:0.250px;">17 536</div>
<div class="t" style="left:570.11px;top:629.33px;font-size:11.3px;color:#dedede;letter-spacing:0.250px;">--</div>
<div class="t" style="left:654.11px;top:629.33px;font-size:11.3px;color:#dedede;letter-spacing:0.250px;">--</div>
<div class="t" style="left:731.74px;top:629.33px;font-size:11.3px;color:#dedede;letter-spacing:0.250px;">112</div>
<div class="t" style="left:810.75px;top:629.33px;font-size:11.3px;color:#dedede;letter-spacing:0.250px;">9,4%</div>
<div class="t" style="left:890.09px;top:629.33px;font-size:11.3px;color:#dedede;letter-spacing:0.250px;">45 568</div>
<div class="t" style="left:979.63px;top:629.33px;font-size:11.3px;color:#dedede;letter-spacing:0.250px;">3,6$</div>
<div class="t" style="left:1064.82px;top:629.33px;font-size:11.3px;color:#dedede;letter-spacing:0.250px;">45$</div>
<div class="t" style="left:1144.75px;top:629.33px;font-size:11.3px;color:#dedede;letter-spacing:0.250px;">2,5%</div>
<div class="t" style="left:1223.09px;top:629.33px;font-size:11.3px;color:#dedede;letter-spacing:0.250px;">3 765$</div>
<div class="t" style="left:1321.11px;top:629.33px;font-size:11.3px;color:#dedede;letter-spacing:0.250px;">--</div>
<div class="t" style="left:1412.11px;top:629.33px;font-size:11.3px;color:#dedede;letter-spacing:0.250px;">--</div>
<div class="t" style="left:166.50px;top:662.99px;font-size:11px;color:#e2e2e2;letter-spacing:0.650px;">Organic channels</div>
<div class="a" style="left:318px;top:661.0px;width:13px;height:13px;border:1.3px solid #7a7a7a;border-radius:1.5px"></div>
<svg style="left:0;top:0" width="1" height="1"><path d="M345.3 664.5L349.4 668.7L353.5 664.5" fill="none" stroke="#7a7a7a" stroke-width="1.3"/></svg>
<svg style="left:0;top:0" width="1" height="1" fill="none" stroke="#7a7a7a" stroke-width="1.5"><circle cx="139.5" cy="665.7" r="4.2"/><path d="M142.6 668.8L146.5 672.7"/></svg>
<div class="t" style="left:398.32px;top:662.73px;font-size:11.3px;color:#dedede;letter-spacing:0.250px;">123</div>
<div class="t" style="left:476.36px;top:662.73px;font-size:11.3px;color:#dedede;letter-spacing:0.250px;">45 25</div>
<div class="t" style="left:556.09px;top:662.73px;font-size:11.3px;color:#dedede;letter-spacing:0.250px;">67 789</div>
<div class="t" style="left:644.75px;top:662.73px;font-size:11.3px;color:#dedede;letter-spacing:0.250px;">3,7%</div>
<div class="t" style="left:734.59px;top:662.73px;font-size:11.3px;color:#dedede;letter-spacing:0.250px;">25</div>
<div class="t" style="left:810.75px;top:662.73px;font-size:11.3px;color:#dedede;letter-spacing:0.250px;">6,3%</div>
<div class="t" style="left:890.09px;top:662.73px;font-size:11.3px;color:#dedede;letter-spacing:0.250px;">34 567</div>
<div class="t" style="left:979.63px;top:662.73px;font-size:11.3px;color:#dedede;letter-spacing:0.250px;">2,8$</div>
<div class="t" style="left:1065.24px;top:662.73px;font-size:11.3px;color:#dedede;letter-spacing:0.250px;">11$</div>
<div class="t" style="left:1144.75px;top:662.73px;font-size:11.3px;color:#dedede;letter-spacing:0.250px;">5,6%</div>
<div class="t" style="left:1216.56px;top:662.73px;font-size:11.3px;color:#dedede;letter-spacing:0.250px;">128 670$</div>
<div class="t" style="left:1321.11px;top:662.73px;font-size:11.3px;color:#dedede;letter-spacing:0.250px;">--</div>
<div class="t" style="left:1412.11px;top:662.73px;font-size:11.3px;color:#dedede;letter-spacing:0.250px;">--</div>
<div class="t" style="left:166.50px;top:696.39px;font-size:11px;color:#e2e2e2;letter-spacing:0.650px;">Google</div>
<div class="a" style="left:318px;top:694.4px;width:13px;height:13px;border:1.3px solid #7a7a7a;border-radius:1.5px"></div>
<svg style="left:0;top:0" width="1" height="1"><path d="M345.3 697.9L349.4 702.1L353.5 697.9" fill="none" stroke="#7a7a7a" stroke-width="1.3"/></svg>
<div class="t" style="left:398.32px;top:696.13px;font-size:11.3px;color:#dedede;letter-spacing:0.250px;">312</div>
<div class="t" style="left:473.09px;top:696.13px;font-size:11.3px;color:#dedede;letter-spacing:0.250px;">23 355</div>
<div class="t" style="left:570.11px;top:696.13px;font-size:11.3px;color:#dedede;letter-spacing:0.250px;">--</div>
<div class="t" style="left:654.11px;top:696.13px;font-size:11.3px;color:#dedede;letter-spacing:0.250px;">--</div>
<div class="t" style="left:734.59px;top:696.13px;font-size:11.3px;color:#dedede;letter-spacing:0.250px;">15</div>
<div class="t" style="left:807.48px;top:696.13px;font-size:11.3px;color:#dedede;letter-spacing:0.250px;">0,04%</div>
<div class="t" style="left:890.09px;top:696.13px;font-size:11.3px;color:#dedede;letter-spacing:0.250px;">56 236</div>
<div class="t" style="left:976.78px;top:696.13px;font-size:11.3px;color:#dedede;letter-spacing:0.250px;">11,3$</div>
<div class="t" style="left:1064.82px;top:696.13px;font-size:11.3px;color:#dedede;letter-spacing:0.250px;">34$</div>
<div class="t" style="left:1144.75px;top:696.13px;font-size:11.3px;color:#dedede;letter-spacing:0.250px;">0,5%</div>
<div class="t" style="left:1223.09px;top:696.13px;font-size:11.3px;color:#dedede;letter-spacing:0.250px;">5 783$</div>
<div class="t" style="left:1311.75px;top:696.13px;font-size:11.3px;color:#dedede;letter-spacing:0.250px;">2,9%</div>
<div class="t" style="left:1399.48px;top:696.13px;font-size:11.3px;color:#dedede;letter-spacing:0.250px;">16.3%</div>
<div class="t" style="left:166.50px;top:729.79px;font-size:11px;color:#e2e2e2;letter-spacing:0.650px;">Bing</div>
<div class="a" style="left:318px;top:727.8px;width:13px;height:13px;border:1.3px solid #7a7a7a;border-radius:1.5px"></div>
<svg style="left:0;top:0" width="1" height="1"><path d="M345.3 731.3L349.4 735.5L353.5 731.3" fill="none" stroke="#7a7a7a" stroke-width="1.3"/></svg>
<div class="t" style="left:401.59px;top:729.53px;font-size:11.3px;color:#dedede;letter-spacing:0.250px;">56</div>
<div class="t" style="left:476.36px;top:729.53px;font-size:11.3px;color:#dedede;letter-spacing:0.250px;">9 550</div>
<div class="t" style="left:570.11px;top:729.53px;font-size:11.3px;color:#dedede;letter-spacing:0.250px;">--</div>
<div class="t" style="left:654.11px;top:729.53px;font-size:11.3px;color:#dedede;letter-spacing:0.250px;">--</div>
<div class="t" style="left:734.59px;top:729.53px;font-size:11.3px;color:#dedede;letter-spacing:0.250px;">12</div>
<div class="t" style="left:810.75px;top:729.53px;font-size:11.3px;color:#dedede;letter-spacing:0.250px;">0,5%</div>
<div class="t" style="left:904.11px;top:729.53px;font-size:11.3px;color:#dedede;letter-spacing:0.250px;">--</div>
<div class="t" style="left:987.11px;top:729.53px;font-size:11.3px;color:#dedede;letter-spacing:0.250px;">--</div>
<div class="t" style="left:1070.61px;top:729.53px;font-size:11.3px;color:#dedede;letter-spacing:0.250px;">--</div>
<div class="t" style="left:1144.75px;top:729.53px;font-size:11.3px;color:#dedede;letter-spacing:0.250px;">0,9%</div>
<div class="t" style="left:1228.06px;top:729.53px;font-size:11.3px;color:#dedede;letter-spacing:0.250px;">457$</div>
<div class="t" style="left:1308.48px;top:729.53px;font-size:11.3px;color:#dedede;letter-spacing:0.250px;">14,9%</div>
<div class="t" style="left:1402.75px;top:729.53px;font-size:11.3px;color:#dedede;letter-spacing:0.250px;">5,7%</div>
<div class="t" style="left:166.50px;top:763.19px;font-size:11px;color:#e2e2e2;letter-spacing:0.650px;">Yahoo</div>
<div class="a" style="left:318px;top:761.2px;width:13px;height:13px;border:1.3px solid #7a7a7a;border-radius:1.5px"></div>
<svg style="left:0;top:0" width="1" height="1"><path d="M345.3 764.7L349.4 768.9L353.5 764.7" fill="none" stroke="#7a7a7a" stroke-width="1.3"/></svg>
<div class="t" style="left:401.59px;top:762.93px;font-size:11.3px;color:#dedede;letter-spacing:0.250px;">45</div>
<div class="t" style="left:476.36px;top:762.93px;font-size:11.3px;color:#dedede;letter-spacing:0.250px;">7 348</div>
<div class="t" style="left:570.11px;top:762.93px;font-size:11.3px;color:#dedede;letter-spacing:0.250px;">--</div>
<div class="t" style="left:654.11px;top:762.93px;font-size:11.3px;color:#dedede;letter-spacing:0.250px;">--</div>
<div class="t" style="left:734.59px;top:762.93px;font-size:11.3px;color:#dedede;letter-spacing:0.250px;">39</div>
<div class="t" style="left:810.75px;top:762.93px;font-size:11.3px;color:#dedede;letter-spacing:0.250px;">3,8%</div>
<div class="t" style="left:904.11px;top:762.93px;font-size:11.3px;color:#dedede;letter-spacing:0.250px;">--</div>
<div class="t" style="left:987.11px;top:762.93px;font-size:11.3px;color:#dedede;letter-spacing:0.250px;">--</div>
<div class="t" style="left:1070.61px;top:762.93px;font-size:11.3px;color:#dedede;letter-spacing:0.250px;">--</div>
<div class="t" style="left:1144.75px;top:762.93px;font-size:11.3px;color:#dedede;letter-spacing:0.250px;">3,7%</div>
<div class="t" style="left:1219.83px;top:762.93px;font-size:11.3px;color:#dedede;letter-spacing:0.250px;">36 789$</div>
<div class="t" style="left:1308.48px;top:762.93px;font-size:11.3px;color:#dedede;letter-spacing:0.250px;">32,7%</div>
<div class="t" style="left:1402.75px;top:762.93px;font-size:11.3px;color:#dedede;letter-spacing:0.250px;">0,6%</div>
<div class="t" style="left:166.50px;top:796.59px;font-size:11px;color:#e2e2e2;letter-spacing:0.650px;">Yandex</div>
<div class="a" style="left:318px;top:794.6px;width:13px;height:13px;border:1.3px solid #7a7a7a;border-radius:1.5px"></div>
<svg style="left:0;top:0" width="1" height="1"><path d="M345.3 798.1L349.4 802.3L353.5 798.1" fill="none" stroke="#7a7a7a" stroke-width="1.3"/></svg>
<div class="t" style="left:401.59px;top:796.33px;font-size:11.3px;color:#dedede;letter-spacing:0.250px;">12</div>
<div class="t" style="left:476.36px;top:796.33px;font-size:11.3px;color:#dedede;letter-spacing:0.250px;">4 345</div>
<div class="t" style="left:570.11px;top:796.33px;font-size:11.3px;color:#dedede;letter-spacing:0.250px;">--</div>
<div class="t" style="left:654.11px;top:796.33px;font-size:11.3px;color:#dedede;letter-spacing:0.250px;">--</div>
<div class="t" style="left:737.86px;top:796.33px;font-size:11.3px;color:#dedede;letter-spacing:0.250px;">8</div>
<div class="t" style="left:810.75px;top:796.33px;font-size:11.3px;color:#dedede;letter-spacing:0.250px;">4,5%</div>
<div class="t" style="left:904.11px;top:796.33px;font-size:11.3px;color:#dedede;letter-spacing:0.250px;">--</div>
<div class="t" style="left:976.36px;top:796.33px;font-size:11.3px;color:#dedede;letter-spacing:0.250px;">45,6$</div>
<div class="t" style="left:1064.82px;top:796.33px;font-size:11.3px;color:#dedede;letter-spacing:0.250px;">39$</div>
<div class="t" style="left:1141.90px;top:796.33px;font-size:11.3px;color:#dedede;letter-spacing:0.250px;">11,0%</div>
<div class="t" style="left:1223.09px;top:796.33px;font-size:11.3px;color:#dedede;letter-spacing:0.250px;">2 145$</div>
<div class="t" style="left:1308.48px;top:796.33px;font-size:11.3px;color:#dedede;letter-spacing:0.250px;">34,7%</div>
<div class="t" style="left:1399.48px;top:796.33px;font-size:11.3px;color:#dedede;letter-spacing:0.250px;">15,7%</div>
<div class="t" style="left:166.50px;top:829.99px;font-size:11px;color:#e2e2e2;letter-spacing:0.650px;">Direct cahnnels</div>
<div class="a" style="left:318px;top:828.0px;width:13px;height:13px;border:1.3px solid #7a7a7a;border-radius:1.5px"></div>
<svg style="left:0;top:0" width="1" height="1"><path d="M345.3 831.5L349.4 835.7L353.5 831.5" fill="none" stroke="#7a7a7a" stroke-width="1.3"/></svg>
<svg style="left:0;top:0" width="1" height="1" fill="none" stroke="#7a7a7a" stroke-width="1.4" stroke-linejoin="round"><path d="M147 828.5L135 833.5L140.5 835.0L142 840.5Z"/></svg>
<div class="t" style="left:401.59px;top:829.73px;font-size:11.3px;color:#dedede;letter-spacing:0.250px;">78</div>
<div class="t" style="left:476.36px;top:829.73px;font-size:11.3px;color:#dedede;letter-spacing:0.250px;">9 256</div>
<div class="t" style="left:570.11px;top:829.73px;font-size:11.3px;color:#dedede;letter-spacing:0.250px;">--</div>
<div class="t" style="left:654.11px;top:829.73px;font-size:11.3px;color:#dedede;letter-spacing:0.250px;">--</div>
<div class="t" style="left:734.59px;top:829.73px;font-size:11.3px;color:#dedede;letter-spacing:0.250px;">21</div>
<div class="t" style="left:810.75px;top:829.73px;font-size:11.3px;color:#dedede;letter-spacing:0.250px;">3,9%</div>
<div class="t" style="left:904.11px;top:829.73px;font-size:11.3px;color:#dedede;letter-spacing:0.250px;">--</div>
<div class="t" style="left:979.63px;top:829.73px;font-size:11.3px;color:#dedede;letter-spacing:0.250px;">3,7$</div>
<div class="t" style="left:1064.82px;top:829.73px;font-size:11.3px;color:#dedede;letter-spacing:0.250px;">67$</div>
<div class="t" style="left:1144.75px;top:829.73px;font-size:11.3px;color:#dedede;letter-spacing:0.250px;">5,7%</div>
<div class="t" style="left:1223.09px;top:829.73px;font-size:11.3px;color:#dedede;letter-spacing:0.250px;">7 893$</div>
<div class="t" style="left:1308.48px;top:829.73px;font-size:11.3px;color:#dedede;letter-spacing:0.250px;">12,7%</div>
<div class="t" style="left:1399.48px;top:829.73px;font-size:11.3px;color:#dedede;letter-spacing:0.250px;">17,8%</div>
<div class="t" style="left:166.50px;top:863.39px;font-size:11px;color:#e2e2e2;letter-spacing:0.650px;">Refferal cahnnels</div>
<div class="a" style="left:318px;top:861.4px;width:13px;height:13px;border:1.3px solid #7a7a7a;border-radius:1.5px"></div>
<svg style="left:0;top:0" width="1" height="1"><path d="M345.3 864.9L349.4 869.1L353.5 864.9" fill="none" stroke="#7a7a7a" stroke-width="1.3"/></svg>
<svg style="left:0;top:0" width="1" height="1" fill="none" stroke="#7a7a7a" stroke-width="1.5"><path d="M139 864.4H137A3.5 3.5 0 0 0 137 871.4H139M143 864.4H145A3.5 3.5 0 0 1 145 871.4H143M137.5 867.9H144.5"/></svg>
<div class="t" style="left:401.59px;top:863.13px;font-size:11.3px;color:#dedede;letter-spacing:0.250px;">67</div>
<div class="t" style="left:476.36px;top:863.13px;font-size:11.3px;color:#dedede;letter-spacing:0.250px;">6 975</div>
<div class="t" style="left:570.11px;top:863.13px;font-size:11.3px;color:#dedede;letter-spacing:0.250px;">--</div>
<div class="t" style="left:654.11px;top:863.13px;font-size:11.3px;color:#dedede;letter-spacing:0.250px;">--</div>
<div class="t" style="left:734.59px;top:863.13px;font-size:11.3px;color:#dedede;letter-spacing:0.250px;">23</div>
<div class="t" style="left:810.75px;top:863.13px;font-size:11.3px;color:#dedede;letter-spacing:0.250px;">1,8%</div>
<div class="t" style="left:904.11px;top:863.13px;font-size:11.3px;color:#dedede;letter-spacing:0.250px;">--</div>
<div class="t" style="left:976.36px;top:863.13px;font-size:11.3px;color:#dedede;letter-spacing:0.250px;">12,8$</div>
<div class="t" style="left:1064.82px;top:863.13px;font-size:11.3px;color:#dedede;letter-spacing:0.250px;">23$</div>
<div class="t" style="left:1141.48px;top:863.13px;font-size:11.3px;color:#dedede;letter-spacing:0.250px;">12,1%</div>
<div class="t" style="left:1220.25px;top:863.13px;font-size:11.3px;color:#dedede;letter-spacing:0.250px;">11 476$</div>
<div class="t" style="left:1321.11px;top:863.13px;font-size:11.3px;color:#dedede;letter-spacing:0.250px;">--</div>
<div class="t" style="left:1412.11px;top:863.13px;font-size:11.3px;color:#dedede;letter-spacing:0.250px;">--</div>
<div class="t" style="left:166.50px;top:896.79px;font-size:11px;color:#e2e2e2;letter-spacing:0.650px;">Mail channels</div>
<div class="a" style="left:318px;top:894.8px;width:13px;height:13px;border:1.3px solid #7a7a7a;border-radius:1.5px"></div>
<svg style="left:0;top:0" width="1" height="1"><path d="M345.3 898.3L349.4 902.5L353.5 898.3" fill="none" stroke="#7a7a7a" stroke-width="1.3"/></svg>
<svg style="left:0;top:0" width="1" height="1" fill="none" stroke="#7a7a7a" stroke-width="1.4"><rect x="134.5" y="895.8" width="13" height="10" rx="0.5"/><path d="M134.5 896.3L141 901.8L147.5 896.3"/></svg>
<div class="t" style="left:401.59px;top:896.53px;font-size:11.3px;color:#dedede;letter-spacing:0.250px;">55</div>
<div class="t" style="left:473.09px;top:896.53px;font-size:11.3px;color:#dedede;letter-spacing:0.250px;">12 567</div>
<div class="t" style="left:556.09px;top:896.53px;font-size:11.3px;color:#dedede;letter-spacing:0.250px;">23 745</div>
<div class="t" style="left:644.75px;top:896.53px;font-size:11.3px;color:#dedede;letter-spacing:0.250px;">2,6%</div>
<div class="t" style="left:735.01px;top:896.53px;font-size:11.3px;color:#dedede;letter-spacing:0.250px;">11</div>
<div class="t" style="left:810.75px;top:896.53px;font-size:11.3px;color:#dedede;letter-spacing:0.250px;">0,3%</div>
<div class="t" style="left:890.09px;top:896.53px;font-size:11.3px;color:#dedede;letter-spacing:0.250px;">34 567</div>
<div class="t" style="left:979.63px;top:896.53px;font-size:11.3px;color:#dedede;letter-spacing:0.250px;">0,7$</div>
<div class="t" style="left:1063.13px;top:896.53px;font-size:11.3px;color:#dedede;letter-spacing:0.250px;">7,0$</div>
<div class="t" style="left:1141.48px;top:896.53px;font-size:11.3px;color:#dedede;letter-spacing:0.250px;">13,6%</div>
<div class="t" style="left:1219.83px;top:896.53px;font-size:11.3px;color:#dedede;letter-spacing:0.250px;">17 893$</div>
<div class="t" style="left:1308.48px;top:896.53px;font-size:11.3px;color:#dedede;letter-spacing:0.250px;">18,0%</div>
<div class="t" style="left:1399.48px;top:896.53px;font-size:11.3px;color:#dedede;letter-spacing:0.250px;">44,9%</div>
<div class="t" style="left:166.50px;top:930.19px;font-size:11px;color:#e2e2e2;letter-spacing:0.650px;">Other</div>
<div class="a" style="left:318px;top:928.2px;width:13px;height:13px;border:1.3px solid #7a7a7a;border-radius:1.5px"></div>
<svg style="left:0;top:0" width="1" height="1"><path d="M345.3 931.7L349.4 935.9L353.5 931.7" fill="none" stroke="#7a7a7a" stroke-width="1.3"/></svg>
<svg style="left:0;top:0" width="1" height="1" fill="none" stroke="#7a7a7a" stroke-width="1.4"><path d="M135 930.2H147M135 933.2H147M135 936.2H147M135 939.2H147"/></svg>
<div class="t" style="left:401.59px;top:929.93px;font-size:11.3px;color:#dedede;letter-spacing:0.250px;">12</div>
<div class="t" style="left:476.36px;top:929.93px;font-size:11.3px;color:#dedede;letter-spacing:0.250px;">4 786</div>
<div class="t" style="left:559.36px;top:929.93px;font-size:11.3px;color:#dedede;letter-spacing:0.250px;">1 648</div>
<div class="t" style="left:644.75px;top:929.93px;font-size:11.3px;color:#dedede;letter-spacing:0.250px;">2,9%</div>
<div class="t" style="left:734.59px;top:929.93px;font-size:11.3px;color:#dedede;letter-spacing:0.250px;">14</div>
<div class="t" style="left:810.75px;top:929.93px;font-size:11.3px;color:#dedede;letter-spacing:0.250px;">0,8%</div>
<div class="t" style="left:890.09px;top:929.93px;font-size:11.3px;color:#dedede;letter-spacing:0.250px;">34 567</div>
<div class="t" style="left:979.63px;top:929.93px;font-size:11.3px;color:#dedede;letter-spacing:0.250px;">2,4$</div>
<div class="t" style="left:1063.13px;top:929.93px;font-size:11.3px;color:#dedede;letter-spacing:0.250px;">4,7$</div>
<div class="t" style="left:1144.75px;top:929.93px;font-size:11.3px;color:#dedede;letter-spacing:0.250px;">1,6%</div>
<div class="t" style="left:1223.09px;top:929.93px;font-size:11.3px;color:#dedede;letter-spacing:0.250px;">1 843$</div>
<div class="t" style="left:1311.75px;top:929.93px;font-size:11.3px;color:#dedede;letter-spacing:0.250px;">1,0%</div>
<div class="t" style="left:1402.75px;top:929.93px;font-size:11.3px;color:#dedede;letter-spacing:0.250px;">4,9%</div>
<div class="a" style="left:1463.8px;top:610px;width:6px;height:100px;border-radius:3px;background:#5f5f5f"></div>
<div class="a" style="left:481px;top:927.5px;width:100px;height:6px;border-radius:3px;background:#666"></div>
<svg style="left:0;top:0" width="1" height="1"><path d="M0 9.5L9.5 0" stroke="#000" stroke-width="1.1"/><path d="M1488 0H1500V12Z" fill="#000"/><path d="M0 929L9 938H0Z" fill="#000"/><path d="M1500 925V938H1487Z" fill="#000"/></svg></body></html>
